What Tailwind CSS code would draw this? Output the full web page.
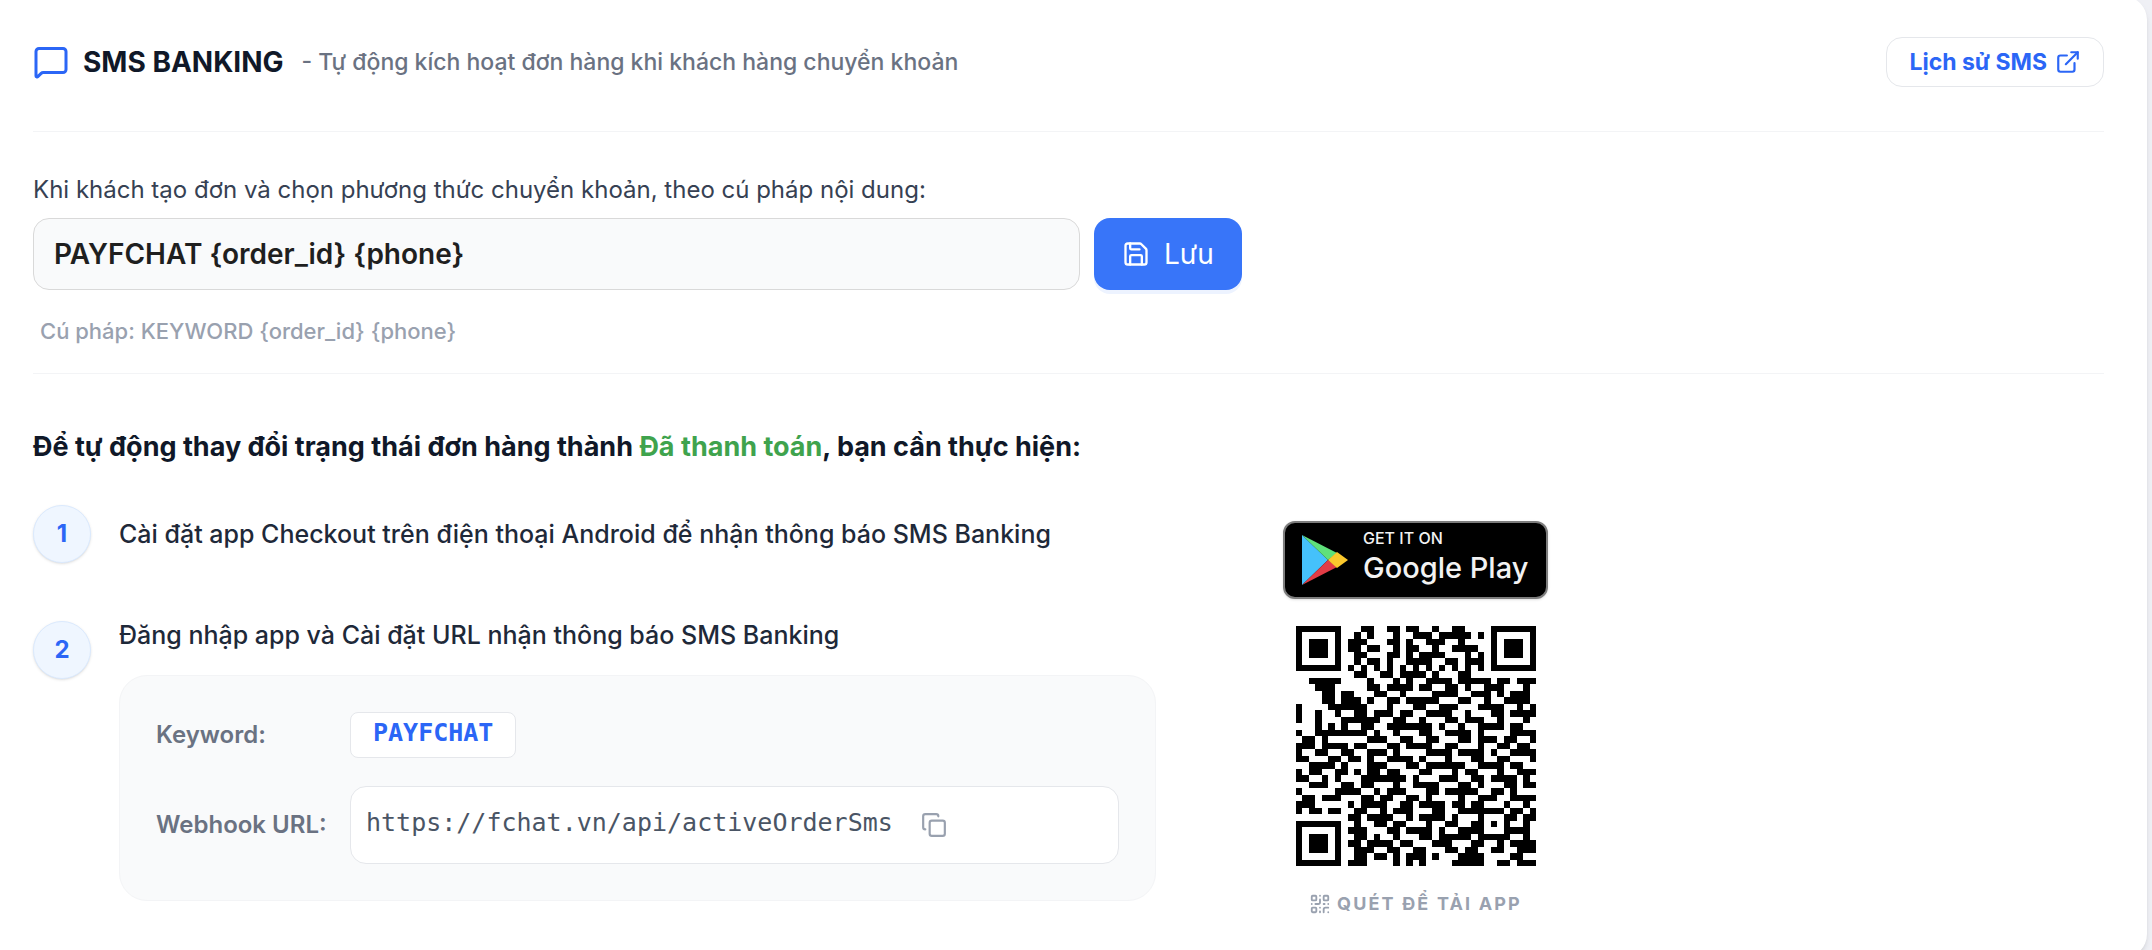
<!DOCTYPE html>
<html lang="vi">
  <head>
    <meta charset="UTF-8" />
    <meta name="viewport" content="width=device-width, initial-scale=1.0" />
    <title>SMS Banking</title>
    <script src="https://cdn.jsdelivr.net/npm/@tailwindcss/browser@4"></script>
  </head>
  <body class="h-screen overflow-hidden bg-[#eff0f5] font-[Inter,sans-serif] text-gray-900">
    <main class="-mt-1 mr-[5px] rounded-r-3xl bg-white pt-[41px] pr-[43px] pb-10 pl-[33px] shadow-md">
      <!-- Header -->
      <header class="flex items-center justify-between border-b border-gray-100 pb-11">
        <div class="flex items-center">
          <svg class="size-9 text-[#2b66f6]" viewBox="0 0 24 24" fill="none" stroke="currentColor" stroke-width="2" stroke-linecap="round" stroke-linejoin="round">
            <path d="M22 17a2 2 0 0 1-2 2H6.83a2 2 0 0 0-1.42.59l-2.2 2.2A.71.71 0 0 1 2 21.29V5a2 2 0 0 1 2-2h16a2 2 0 0 1 2 2z" />
          </svg>
          <h1 class="ml-3.5 text-[28px] leading-9 font-bold">SMS BANKING</h1>
          <p class="ml-[18px] text-[23px] leading-9 font-medium text-gray-500">- Tự động kích hoạt đơn hàng khi khách hàng chuyển khoản</p>
        </div>
        <a href="#" class="flex h-[50px] items-center gap-2 rounded-2xl border border-gray-200 px-[22px] text-[23px] font-bold text-[#2b66f6]">
          Lịch sử SMS
          <svg class="size-[26px]" viewBox="0 0 24 24" fill="none" stroke="currentColor" stroke-width="2" stroke-linecap="round" stroke-linejoin="round">
            <path d="M15 3h6v6" />
            <path d="M10 14 21 3" />
            <path d="M18 13v6a2 2 0 0 1-2 2H5a2 2 0 0 1-2-2V8a2 2 0 0 1 2-2h6" />
          </svg>
        </a>
      </header>

      <!-- Transfer syntax -->
      <section class="border-b border-gray-100 pt-10 pb-6">
        <label for="syntax" class="block text-[24px] leading-9 text-gray-700">Khi khách tạo đơn và chọn phương thức chuyển khoản, theo cú pháp nội dung:</label>
        <div class="mt-2.5 flex gap-3.5">
          <input id="syntax" type="text" value="PAYFCHAT {order_id} {phone}" class="h-[72px] w-[1047px] rounded-2xl border border-[#d9d9d9] bg-gray-50 px-5 text-[28px] font-semibold text-[#1f1f1f]" />
          <button type="button" class="flex h-[72px] items-center gap-3.5 rounded-2xl bg-[#3875f9] px-7 text-[28px] text-white shadow-[0_4px_0_#edf3ff]">
            <svg class="size-7" viewBox="0 0 24 24" fill="none" stroke="currentColor" stroke-width="2" stroke-linecap="round" stroke-linejoin="round">
              <path d="M15.2 3a2 2 0 0 1 1.4.6l3.8 3.8a2 2 0 0 1 .6 1.4V19a2 2 0 0 1-2 2H5a2 2 0 0 1-2-2V5a2 2 0 0 1 2-2z" />
              <path d="M17 21v-7a1 1 0 0 0-1-1H8a1 1 0 0 0-1 1v7" />
              <path d="M7 3v4a1 1 0 0 0 1 1h7" />
            </svg>
            Lưu
          </button>
        </div>
        <p class="mt-[23px] pl-[7px] text-[22px] leading-9 font-medium text-gray-400">Cú pháp: KEYWORD {order_id} {phone}</p>
      </section>

      <!-- Steps -->
      <section class="pt-[55px]">
        <h2 class="text-[27px] leading-9 font-bold">Để tự động thay đổi trạng thái đơn hàng thành <span class="text-[#3fa34d]">Đã thanh toán</span>, bạn cần thực hiện:</h2>
        <div class="mt-10 flex">
          <ol class="flex w-[1123px] flex-col gap-[54px]">
            <li class="flex items-center gap-7">
              <span class="flex size-[58px] items-center justify-center rounded-full border border-blue-100 bg-blue-50 text-2xl font-bold text-[#2b66f6] shadow-sm">1</span>
              <p class="text-[25px] leading-9 font-medium text-gray-800">Cài đặt app Checkout trên điện thoại Android để nhận thông báo SMS Banking</p>
            </li>
            <li class="flex items-start gap-7">
              <span class="mt-1 flex size-[58px] shrink-0 items-center justify-center rounded-full border border-blue-100 bg-blue-50 text-2xl font-bold text-[#2b66f6] shadow-sm">2</span>
              <div class="flex-1">
                <p class="text-[25px] leading-9 font-medium text-gray-800">Đăng nhập app và Cài đặt URL nhận thông báo SMS Banking</p>
                <dl class="mt-[22px] flex flex-col gap-7 rounded-[28px] border border-gray-100 bg-gray-50 px-9 py-9">
                  <div class="flex items-center">
                    <dt class="w-[194px] text-[24px] font-semibold text-gray-500">Keyword:</dt>
                    <dd class="flex h-[46px] items-center rounded-lg border border-gray-200 bg-white px-[22px] pb-1 font-[DejaVu_Sans_Mono,monospace] text-[25px] font-bold text-[#2b66f6]">PAYFCHAT</dd>
                  </div>
                  <div class="flex items-center">
                    <dt class="w-[194px] text-[24px] font-semibold text-gray-500">Webhook URL:</dt>
                    <dd class="flex h-[78px] flex-1 items-center gap-7 rounded-2xl border border-gray-200 bg-white px-[15px]">
                      <span class="pb-1 font-[DejaVu_Sans_Mono,monospace] text-[25px] text-gray-600">https://fchat.vn/api/activeOrderSms</span>
                      <button type="button" aria-label="Copy" class="text-gray-400">
                        <svg class="size-[26px]" viewBox="0 0 24 24" fill="none" stroke="currentColor" stroke-width="2" stroke-linecap="round" stroke-linejoin="round">
                          <rect x="8" y="8" width="14" height="14" rx="2" />
                          <path d="M4 16c-1.1 0-2-.9-2-2V4c0-1.1.9-2 2-2h10c1.1 0 2 .9 2 2" />
                        </svg>
                      </button>
                    </dd>
                  </div>
                </dl>
              </div>
            </li>
          </ol>

          <!-- App download -->
          <div class="ml-[127px] flex flex-col items-center pt-4">
            <a href="#" class="flex h-[78px] w-[265px] items-center rounded-xl border-2 border-[#7d7d7d] bg-black pl-4 text-[#f2f2f2] shadow-sm">
              <svg class="h-[52px] w-12" viewBox="0 0 48 52">
                <path fill="#45c1fb" d="M1 1v50l26-25z" />
                <path fill="#5fe07a" d="M1 1 36 19l-9 7z" />
                <path fill="#e23c46" d="M1 51l35-18-9-7z" />
                <path fill="#fbc82c" d="M36 18 47 26 36 34l-9-8z" />
              </svg>
              <span class="ml-3.5 flex flex-col gap-1 pb-1">
                <span class="text-[16px] leading-4 font-medium">GET IT ON</span>
                <span class="text-[29px] leading-9 font-medium">Google Play</span>
              </span>
            </a>
            <svg id="qr" class="mt-[27px] size-60" viewBox="0 0 37 37" shape-rendering="crispEdges" role="img" aria-label="QR"></svg>
            <p class="mt-6 flex items-center gap-1.5 text-[18px] leading-7 font-bold tracking-[0.12em] text-gray-400">
              <svg class="size-[22px]" viewBox="0 0 24 24" fill="none" stroke="currentColor" stroke-width="2" stroke-linecap="round" stroke-linejoin="round">
                <rect width="5" height="5" x="3" y="3" rx="1" />
                <rect width="5" height="5" x="16" y="3" rx="1" />
                <rect width="5" height="5" x="3" y="16" rx="1" />
                <path d="M21 16h-3a2 2 0 0 0-2 2v3M21 21v.01M12 7v3a2 2 0 0 1-2 2H7M3 12h.01M12 3h.01M12 16v.01M16 12h1M21 12v.01M12 21v-1" />
              </svg>
              QUÉT ĐỂ TẢI APP
            </p>
          </div>
        </div>
      </section>
    </main>

    <script>
      // one string per QR row, # is a dark module
      const rows = [
        '#######...##..##.##..#..##....#######',
        '#.....#..#.#...#..###.#####.#.#.....#',
        '#.###.#.###...##.#..###..#....#.###.#',
        '#.###.#.##.##..#.##..#..####..#.###.#',
        '#.###.#..##...##.#.####...#.#.#.###.#',
        '#.....#..#.##.#..####..##.###.#.....#',
        '#######.#.#.#.#.#.#.#.#.#.#.#.#######',
        '.........##..##.####.#...##..........',
        '..#####....#...#.#..####.#####.##.###',
        '...###.....##.####.##..##.#..###...#.',
        '....##.##...##..#....####..###.#.###.',
        '....##.###.#..##.#####...##..#..####.',
        '#....######...#...##..###...####..#.#',
        '#..#..#..##.###.##..####..#...##.####',
        '#..#...######..##..#...##.###..#...#.',
        '...#.#.#..##..#######.#..#..####.##..',
        '#..########.#..#...##..####.#....####',
        '.##.#......###..##..##...##.###.##..#',
        '###.####.##...##.####..##...#..##.##.',
        '#..##..##..###.#....####.####.#..####',
        '##...##.##.#..####.#...#...##..##...#',
        '..####.#...###...##.######..####.##..',
        '#.##..##.#.##.##...##...#.##...#..###',
        '##..#.#...#######.#...###..##.####.#.',
        '..###..##.##...#..####...##.#...##.##',
        '#.....####..#.###...##.#####..##.#...',
        '.##.###...##.##..##.#....#..###..####',
        '###.....#.####..##.####.##.##...#..#.',
        '#.##.##..##..#.###...##..#######.##.#',
        '........##.####..#.####.#...#...##.##',
        '#######..#..##.##...#..##..##.#.#..#.',
        '#.....#.###...##.####.#..####...####.',
        '#.###.#..##.#..#...##.#####.#####..#.',
        '#.###.#.##.####.##...###...##..#.####',
        '#.###.#..###..##..##...##.##..##..###',
        '#.....#..##.##.#.###.#...####....##..',
        '#######.###....#.#.#....#####..##.###',
      ];
      let d = '';
      rows.forEach((row, y) => {
        [...row].forEach((cell, x) => {
          if (cell === '#') d += `M${x} ${y}h1v1h-1z`;
        });
      });
      document.getElementById('qr').innerHTML = `<path d="${d}"/>`;
    </script>
  </body>
</html>
